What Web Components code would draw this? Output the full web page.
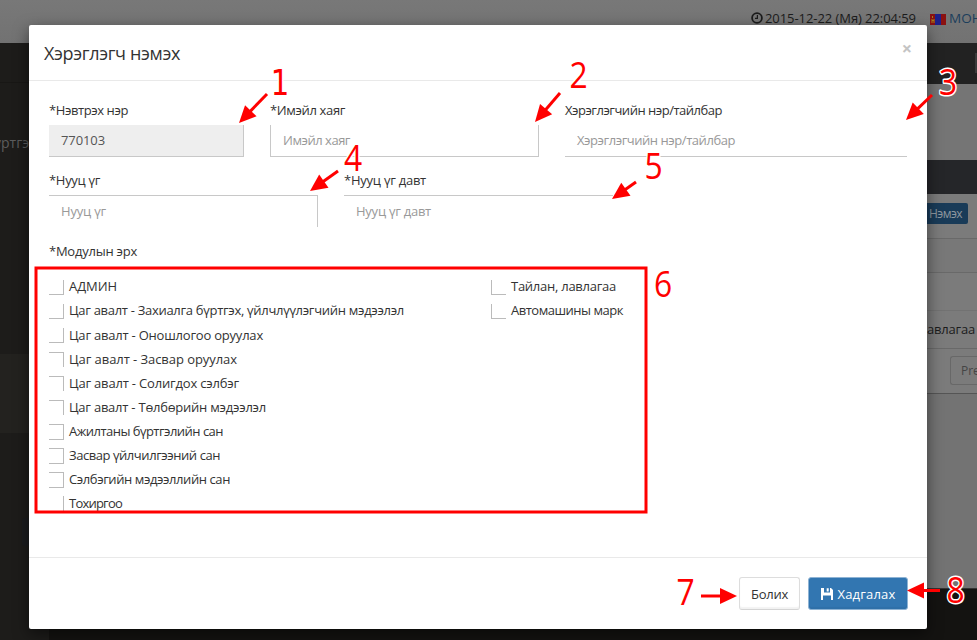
<!DOCTYPE html>
<html lang="mn"><head><meta charset="utf-8"><title>Хэрэглэгч нэмэх</title>
<style>html,body{margin:0;width:977px;height:640px;overflow:hidden;background:#757575;font-family:"Open Sans","Noto Sans",sans-serif;font-size:13px;color:#333}body{display:grid}body>*{grid-area:1/1}</style>
</head><body>
<page-backdrop></page-backdrop>
<user-modal></user-modal>
<red-notes></red-notes>
<script>
const define=(name,html,setup)=>customElements.define(name,class extends HTMLElement{
  connectedCallback(){
    if(this.shadowRoot)return;
    this.attachShadow({mode:'open'}).innerHTML=typeof html==='function'?html(this):html;
    if(setup)setup(this);
  }
});

/* One line of text tracked to the width given in "w". */
define('fit-text','<style>:host{display:inline-block;white-space:nowrap;flex:none}</style><span><slot></slot></span>',el=>{
  const w=+el.getAttribute('w'),n=el.textContent.length;
  if(w){const now=el.shadowRoot.querySelector('span').getBoundingClientRect().width;
    el.style.letterSpacing=((w-now)/n).toFixed(3)+'px';el.style.width=w+'px';}
});

define('text-field',el=>`<style>
:host{display:flex;flex-direction:column;width:${el.getAttribute('width')}px;flex:none}
.l{height:30px;line-height:30px}
.i{box-sizing:border-box;height:32px;line-height:31px;padding-left:12px;border:0 solid #c8c8c8;color:#999;${el.getAttribute('edges')}}
</style><div class="l"><fit-text w="${el.getAttribute('lw')}">${el.getAttribute('label')}</fit-text></div>
<div class="i"><fit-text w="${el.getAttribute('vw')}">${el.getAttribute('value')}</fit-text></div>`);

define('check-item',el=>`<style>
:host{display:flex;height:24px;gap:5px;align-items:flex-start}
i{box-sizing:border-box;width:15px;height:15px;margin-top:5px;flex:none;border:0 solid #bbb;${el.getAttribute('edges')}}
fit-text{line-height:24px}
:host([high]) fit-text{line-height:22px}
</style><i></i><fit-text w="${el.getAttribute('w')}">${el.textContent}</fit-text>`);

define('modal-button',`<style>
:host{display:flex;box-sizing:border-box;height:33px;align-items:center;justify-content:center;gap:5px;border:1px solid #ddd;border-bottom-color:#d4d4d4;border-radius:3px;background:#fff;box-shadow:inset 0 -2px 1px rgba(0,0,0,.05)}
:host([primary]){background:#3276b1;border-color:#8eb3d4;color:#fff}
</style><slot></slot>`);

define('save-icon','<style>:host{display:block;width:12px;height:12px}svg{display:block}</style><svg width="12" height="12" viewBox="0 0 12 12"><path fill="#fff" fill-rule="evenodd" d="M0 0h3v4.500h6V0h1l2 2v10h-2V7.500H2V12H0zM5.700.2h2V3.500h-2z"/></svg>');

define('user-modal',`<style>
:host{display:flex;flex-direction:column;box-sizing:border-box;width:898px;height:604px;margin:25px 0 0 29px;background:#fff;border-radius:2px;box-shadow:0 5px 15px rgba(0,0,0,.5);position:relative;z-index:1}
header{height:55px;flex:none;border-bottom:1px solid #e9e9e9;display:flex;justify-content:space-between;padding:0 15px;font-size:18px;line-height:57px}
header b{font-size:18px;line-height:47px;color:#c4c4c4}
main{height:476px;flex:none;padding:14px 20px 0;box-sizing:border-box}
.row{display:flex;gap:26px}
.row+.row{margin-top:8px}
.m{display:block;margin-top:15px;line-height:18px;height:18px}
.mods{display:grid;grid-template-columns:442px 300px;margin-top:15px;align-items:start}
footer{box-sizing:border-box;height:72px;border-top:1px solid #e9e9e9;display:flex;justify-content:flex-end;gap:8px;padding:19px 19px 0 0}
</style>
<header><fit-text w="136">Хэрэглэгч нэмэх</fit-text><b>×</b></header>
<main>
<div class="row">
<text-field width="195" label="*Нэвтрэх нэр" lw="79" value="770103" vw="44" edges="background:#eee;color:#555;border-width:0 1px 1px 0"></text-field>
<text-field width="269" label="*Имэйл хаяг" lw="75" value="Имэйл хаяг" vw="67" edges="border-width:0 1px 1px 1px"></text-field>
<text-field width="342" label="Хэрэглэгчийн нэр/тайлбар" lw="157" value="Хэрэглэгчийн нэр/тайлбар" vw="158" edges="border-width:0 0 1px 0"></text-field>
</div>
<div class="row">
<text-field width="269" label="*Нууц үг" lw="51" value="Нууц үг" vw="45" edges="border-width:1px 1px 0 0"></text-field>
<text-field width="269" label="*Нууц үг давт" lw="82" value="Нууц үг давт" vw="75" edges="border-width:1px 0 0 0"></text-field>
</div>
<fit-text class="m" w="88">*Модулын эрх</fit-text>
<div class="mods">
<div>
<check-item high w="48" edges="border-width:0 1px 1px 0">АДМИН</check-item>
<check-item high w="335" edges="border-width:0 1px 1px 0">Цаг авалт - Захиалга бүртгэх, үйлчлүүлэгчийн мэдээлэл</check-item>
<check-item w="194" edges="border-width:0 1px 1px 0">Цаг авалт - Оношлогоо оруулах</check-item>
<check-item w="168" edges="border-width:1px 1px 0 0">Цаг авалт - Засвар оруулах</check-item>
<check-item w="170" edges="border-width:1px 1px 0 0">Цаг авалт - Солигдох сэлбэг</check-item>
<check-item w="197" edges="border-width:1px 1px 0 0">Цаг авалт - Төлбөрийн мэдээлэл</check-item>
<check-item w="154" edges="border-width:1px 1px 1px 0;height:16px">Ажилтаны бүртгэлийн сан</check-item>
<check-item w="151" edges="border-width:1px 1px 1px 0;height:16px">Засвар үйлчилгээний сан</check-item>
<check-item w="161" edges="border-width:1px 1px 1px 0;height:16px">Сэлбэгийн мэдээллийн сан</check-item>
<check-item w="53" edges="border-width:0 1px 0 0">Тохиргоо</check-item>
</div><div>
<check-item high w="105" edges="border-width:0 0 1px 1px">Тайлан, лавлагаа</check-item>
<check-item high w="112" edges="border-width:0 0 1px 1px">Автомашины марк</check-item>
</div></div>
</main>
<footer><modal-button style="width:61px"><fit-text w="37">Болих</fit-text></modal-button>
<modal-button primary style="width:100px"><save-icon></save-icon><fit-text w="58">Хадгалах</fit-text></modal-button></footer>`);

define('page-backdrop',`<style>
:host{display:grid;grid-template:43px 1fr/49px 1fr;width:977px;height:640px;overflow:hidden}
.top{grid-column:1/3;background:linear-gradient(#787878,#727272);display:flex;justify-content:flex-end;height:43px;line-height:37px;font-size:13px;color:#1c1c1c}
.top svg{display:block;flex:none}
.clk{margin:12px 2px 0 0}.flag{margin:14px 3px 0 14px}
.lang{color:#1c3e5c;width:28px;overflow:hidden;white-space:nowrap;font-size:13.5px}
.side{background:#1d1c1a;display:flex;flex-direction:column}
.side .a{height:39px;border-bottom:1px solid #181715}
.side .b{height:271px;line-height:120px;color:#5c5c5c;white-space:nowrap;font-size:14px;text-indent:-6px}
.side .c{height:79px;background:#23221f}
.side .d{width:20px;height:28px;margin:85px 0 0 22px;border-radius:3px;background:#1b1c1e}
.main{display:flex;flex-direction:column;background:#757575}
.main>*{box-sizing:border-box;display:flex;justify-content:flex-end;flex:none}
.bar{height:41px;background:#222;padding-top:10px}.bar i{width:2px;height:20px;background:#3a3a3a}
.gap{height:76px}
.head{height:34px;background:#252629}
.r{background:#7b7b7b;border-bottom:1px solid #696969}
.btn{width:60px;height:21px;box-sizing:border-box;padding-right:6px;margin:9px 9px 0 0;background:#193b58;border-radius:2px;color:#8d969e;line-height:21px;text-align:right;font-size:12px}
.btn fit-text{text-align:left}
.pre{box-sizing:border-box;width:27px;height:29px;margin-top:7px;border:1px solid #686868;border-right:0;border-radius:3px 0 0 3px;line-height:28px;padding-left:10px;color:#454545;overflow:hidden;font-size:12px}
.foot{flex:1 0 auto;background:#141311;border-top:1px solid #333}
</style>
<div class="top"><svg class="clk" width="12" height="12" viewBox="0 0 12 12" fill="none" stroke="#1c1c1c"><circle cx="6" cy="6" r="4.900" stroke-width="1.800"/><path d="M6.400 3v3.400H4" stroke-width="1.200"/></svg><fit-text w="151">2015-12-22 (Мя) 22:04:59</fit-text>
<svg class="flag" width="16" height="11"><path fill="#8b1111" d="M0 0h16v11H0z"/><path fill="#20208a" d="M5 0h6v11H5z"/><path fill="#a5801c" d="M2 2h1v2H2zM1.500 5h1v4h-1zM3.500 5h1v4h-1zM2 6h2v1H2z"/></svg><span class="lang">МОНГОЛ</span></div>
<div class="side"><div class="a"></div><div class="b">үртгэл</div><div class="c"></div><div class="d"></div></div>
<div class="main"><div class="bar"><i></i></div><div class="gap"></div><div class="head"></div>
<div class="r" style="height:45px"><div class="btn"><fit-text w="33">Нэмэх</fit-text></div></div>
<div class="r" style="height:34px;background:#787878"></div><div class="r" style="height:38px;border-color:#727272"></div>
<div class="r" style="height:38px;line-height:36px;color:#1c1c1c;padding-right:2px"><fit-text w="48">авлагаа</fit-text></div>
<div class="r" style="height:45px;border-color:#555"><div class="pre">Previous</div></div>
<div style="height:194px;background:#737373"></div><div class="foot"></div></div>`);

/* Callout digits are drawn slightly condensed around their centre. */
const digit=(n,x,y,foot)=>`<text transform="translate(${x} ${y}) scale(${foot?.9:.86} 1)"${foot?` class="foot"`:''}>${n}</text>`;
const arrow=(x1,y1,x2,y2)=>{const L=Math.hypot(x2-x1,y2-y1),a=Math.atan2(y2-y1,x2-x1)*180/Math.PI;
  return `<g transform="translate(${x2} ${y2}) rotate(${a})"><path d="M${-L} 0H-12" stroke="#f00" stroke-width="3"/><path d="M0 0L-17 -8V8z" fill="#f00"/></g>`};
define('red-notes',`<style>:host{display:block;position:relative;z-index:2}svg{display:block}text{font:37px "Open Sans",sans-serif;fill:#f00;stroke:#fff;stroke-width:3px;paint-order:stroke;text-anchor:middle;stroke-linejoin:round}.foot{font:36px "DejaVu Sans Condensed","DejaVu Sans",sans-serif}</style>
<svg width="977" height="640"><rect x="36" y="268" width="610" height="244" fill="none" stroke="#f00" stroke-width="3"/>
${digit(1,280,95,1)+digit(2,578.5,88)+digit(3,948,95)+digit(4,353,170.5)+digit(5,653.5,179)+digit(6,663,297)+digit(7,685.5,605)+digit(8,955.5,603)}
${arrow(267,94,239,123)+arrow(560,93,535,122)+arrow(932,95,906,120)+arrow(338,171,310,191)+arrow(636,182,612,199)+arrow(701,596,737,596)+arrow(940,590.5,907,590.5)}</svg>`);
</script>
</body></html>
